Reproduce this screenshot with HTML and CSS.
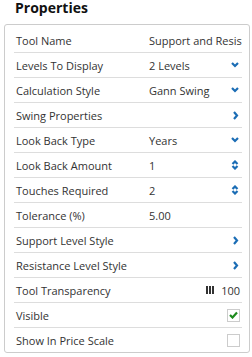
FILE: index.html
```html
<!DOCTYPE html>
<html lang="en">
  <head>
    <meta charset="UTF-8" />
    <title>Properties</title>
    <link rel="stylesheet" href="styles.css">
  </head>
  <body>
    <h1 class="title">Properties</h1>
    <div class="panel">
      <div class="row">
        <span class="label">Tool Name</span>
        <span class="value clip">Support and Resistance</span>
      </div>
      <div class="row">
        <span class="label">Levels To Display</span>
        <span class="value">2 Levels</span>
        <svg class="icon" width="8" height="6" viewBox="0 0 8 6"><polyline points="1,1 4,4 7,1" fill="none" stroke="#1b6db5" stroke-width="2.2"/></svg>
      </div>
      <div class="row">
        <span class="label">Calculation Style</span>
        <span class="value">Gann Swing</span>
        <svg class="icon" width="8" height="6" viewBox="0 0 8 6"><polyline points="1,1 4,4 7,1" fill="none" stroke="#1b6db5" stroke-width="2.2"/></svg>
      </div>
      <div class="row">
        <span class="label">Swing Properties</span>
        <svg class="icon" width="8" height="9" viewBox="0 0 8 9"><polyline points="3,1 6,4.5 3,8" fill="none" stroke="#1b6db5" stroke-width="2.2"/></svg>
      </div>
      <div class="row">
        <span class="label">Look Back Type</span>
        <span class="value">Years</span>
        <svg class="icon" width="8" height="6" viewBox="0 0 8 6"><polyline points="1,1 4,4 7,1" fill="none" stroke="#1b6db5" stroke-width="2.2"/></svg>
      </div>
      <div class="row">
        <span class="label">Look Back Amount</span>
        <span class="value">1</span>
        <svg class="icon" width="8" height="10" viewBox="0 0 8 10"><polyline points="1.5,4 4,1.5 6.5,4" fill="none" stroke="#1b6db5" stroke-width="2.2"/><polyline points="1.5,6 4,8.5 6.5,6" fill="none" stroke="#1b6db5" stroke-width="2.2"/></svg>
      </div>
      <div class="row">
        <span class="label">Touches Required</span>
        <span class="value">2</span>
        <svg class="icon" width="8" height="10" viewBox="0 0 8 10"><polyline points="1.5,4 4,1.5 6.5,4" fill="none" stroke="#1b6db5" stroke-width="2.2"/><polyline points="1.5,6 4,8.5 6.5,6" fill="none" stroke="#1b6db5" stroke-width="2.2"/></svg>
      </div>
      <div class="row">
        <span class="label">Tolerance (%)</span>
        <span class="value">5.00</span>
      </div>
      <div class="row">
        <span class="label">Support Level Style</span>
        <svg class="icon" width="8" height="9" viewBox="0 0 8 9"><polyline points="3,1 6,4.5 3,8" fill="none" stroke="#1b6db5" stroke-width="2.2"/></svg>
      </div>
      <div class="row">
        <span class="label">Resistance Level Style</span>
        <svg class="icon" width="8" height="9" viewBox="0 0 8 9"><polyline points="3,1 6,4.5 3,8" fill="none" stroke="#1b6db5" stroke-width="2.2"/></svg>
      </div>
      <div class="row">
        <span class="label">Tool Transparency</span>
        <span class="slider">
          <svg width="8" height="8" viewBox="0 0 8 8"><rect x="0" y="0" width="2" height="8" fill="#333"/><rect x="3" y="0" width="2" height="8" fill="#333"/><rect x="6" y="0" width="2" height="8" fill="#333"/></svg>
          <span>100</span>
        </span>
      </div>
      <div class="row">
        <span class="label">Visible</span>
        <span class="check">
          <svg width="9" height="8" viewBox="0 0 9 8"><polyline points="1,4 3.5,6.5 8,1.5" fill="none" stroke="#1e8a1e" stroke-width="2.2"/></svg>
        </span>
      </div>
      <div class="row">
        <span class="label">Show In Price Scale</span>
        <span class="check"></span>
      </div>
    </div>
  </body>
</html>
```

FILE: styles.css
```css
body {
  margin: 0;
  padding: 0;
  background-color: white;
  font-family: "Open Sans", Arial, sans-serif;
  color: #333;
}
.title {
  margin: 0;
  padding: 0 0 0 15px;
  height: 24px;
  font-size: 14px;
  line-height: 16px;
  font-weight: bold;
  color: #111;
}
.panel {
  margin: 0 4px;
  width: 228px;
  padding: 3px 7px 0 9px;
  border: 1px solid #ccc;
  border-radius: 3px;
}
.row {
  display: flex;
  align-items: center;
  height: 24px;
  padding-left: 2px;
  border-bottom: 1px solid #ddd;
  font-size: 11px;
  position: relative;
}
.row:last-child {
  border-bottom: none;
}
.label {
  width: 133px;
  flex-shrink: 0;
  white-space: nowrap;
}
.value {
  flex: 1;
  white-space: nowrap;
}
.clip {
  overflow: hidden;
}
.icon {
  margin-left: auto;
  margin-right: 3px;
}
.slider {
  margin-left: auto;
  display: flex;
  align-items: center;
  gap: 7px;
  margin-right: 2px;
}
.check {
  margin-left: auto;
  margin-right: 2px;
  width: 11px;
  height: 11px;
  border: 1px solid #ccc;
  display: flex;
  align-items: center;
  justify-content: center;
}
```
